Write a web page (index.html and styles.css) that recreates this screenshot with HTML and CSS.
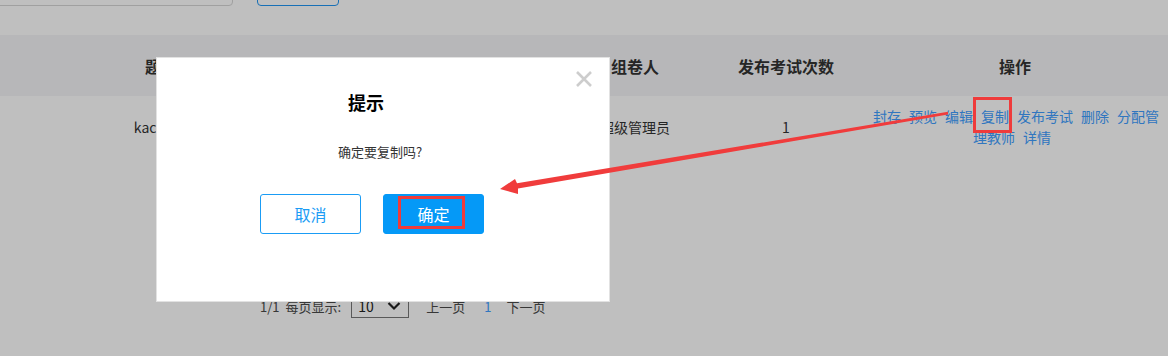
FILE: index.html
```html
<!DOCTYPE html>
<html lang="zh-CN">
<head>
    <meta charset="utf-8"/>
    <title>试卷管理</title>
    <link rel="stylesheet" href="styles.css">
</head>
<body>
    <div class="page">
        <div class="toolbar">
            <input class="search-input" type="text">
            <button class="search-btn" type="button"></button>
        </div>

        <div class="table">
            <div class="thead">
                <div class="cell">题库名称</div>
                <div class="cell">题目数量</div>
                <div class="cell">组卷人</div>
                <div class="cell">发布考试次数</div>
                <div class="cell">操作</div>
            </div>
            <div class="tbody">
                <div class="row">
                    <div class="cell">kac测试题库1</div>
                    <div class="cell">20</div>
                    <div class="cell">超级管理员</div>
                    <div class="cell">1</div>
                    <div class="cell actions"><a>封存</a><a>预览</a><a>编辑</a><a>复制</a><a>发布考试</a><a>删除</a><a>分配管理教师</a><a>详情</a></div>
                </div>
            </div>
        </div>

        <div class="pager">
            <span>1/1</span>
            <span class="pager-label">每页显示:</span>
            <div class="page-size">
                <span>10</span>
                <svg class="chevron" width="14" height="10" viewBox="0 0 14 10"><polyline points="1.5,2 7,7.5 12.5,2" fill="none" stroke="#222" stroke-width="2.2"/></svg>
            </div>
            <span class="pager-prev">上一页</span>
            <span class="pager-num">1</span>
            <span class="pager-next">下一页</span>
        </div>
    </div>

    <!-- confirm dialog -->
    <div class="mask"></div>
    <div class="dialog" role="dialog" aria-labelledby="dialog-title">
        <svg class="dialog-close" width="18" height="18" viewBox="0 0 18 18"><path d="M2 2 L16 16 M16 2 L2 16" stroke="#cdcdcd" stroke-width="2.6"/></svg>
        <h2 id="dialog-title" class="dialog-title">提示</h2>
        <p class="dialog-text">确定要复制吗?</p>
        <div class="dialog-buttons">
            <button class="btn btn-cancel" type="button">取消</button>
            <button class="btn btn-ok" type="button">确定</button>
        </div>
    </div>

    <!-- screenshot annotations -->
    <svg class="marks" width="1168" height="356" viewBox="0 0 1168 356">
        <rect x="974.5" y="98.5" width="36" height="33" fill="none" stroke="#ef3b3b" stroke-width="3"/>
        <rect x="399.5" y="197.5" width="64" height="30" fill="none" stroke="#ef3b3b" stroke-width="3"/>
        <polygon points="500,189 515,179 517,183.3 948,111.8 948,114.4 518,188.6 518,194" fill="#f03c3c"/>
    </svg>
</body>
</html>
```

FILE: styles.css
```css
* {
    box-sizing: border-box;
}

body {
    margin: 0;
    font-family: "Noto Sans CJK SC", "Noto Sans", sans-serif;
    color: #333;
    background: #fff;
    overflow: hidden;
}

.page {
    width: 1168px;
    height: 356px;
}

/* search bar, mostly scrolled out of view */
.toolbar {
    height: 35px;
    display: flex;
    gap: 24px;
}
.search-input {
    margin: -26px 0 0 -10px;
    width: 243px;
    height: 32px;
    border: 1px solid #d6d6d6;
    border-radius: 4px;
}
.search-btn {
    margin-top: -26px;
    width: 82px;
    height: 32px;
    border: 1px solid #2196f3;
    border-radius: 4px;
    background: #fff;
}

/* table */
.thead,
.row {
    display: grid;
    grid-template-columns: 354px 206px 150px 152px 306px;
    align-items: center;
    text-align: center;
}
.thead {
    height: 61px;
    background: #f5f5f7;
    font-size: 16px;
    font-weight: bold;
}
.tbody {
    height: 176px;
}
.row {
    height: 62px;
    font-size: 14px;
}
.actions {
    padding: 0 3px 0 1px;
    line-height: 21px;
}
.actions a {
    margin: 0 4px;
    color: #409eff;
    cursor: pointer;
}

/* pagination */
.pager {
    height: 68px;
    padding-left: 260px;
    display: flex;
    align-items: center;
    font-size: 13px;
    color: #4a4a4a;
}
.pager-label {
    margin-left: 6px;
}
.page-size {
    margin-left: 10px;
    width: 58px;
    height: 24px;
    border: 1px solid #777;
    display: flex;
    align-items: center;
    justify-content: space-between;
    padding: 0 7px 0 6px;
    font-size: 14px;
    color: #222;
}
.pager-prev {
    margin-left: 17px;
}
.pager-num {
    margin-left: 19px;
    color: #409eff;
}
.pager-next {
    margin-left: 15px;
}

/* dialog */
.mask {
    position: fixed;
    top: 0;
    right: 0;
    bottom: 0;
    left: 0;
    background: rgba(0, 0, 0, 0.25);
}
.dialog {
    position: fixed;
    top: 57px;
    left: 156px;
    width: 454px;
    height: 245px;
    background: #fff;
    border: 1px solid #e2e2e2;
    display: flex;
    flex-direction: column;
    align-items: center;
}
.dialog-close {
    position: absolute;
    top: 12px;
    right: 16px;
}
.dialog-title {
    margin: 32px 34px 0 0;
    font-size: 18px;
    line-height: 24px;
    color: #000;
}
.dialog-text {
    margin: 28px 6px 0 0;
    font-size: 13px;
    line-height: 20px;
    color: #333;
}
.dialog-buttons {
    margin: 32px 22px 0 0;
    display: flex;
    gap: 22px;
}
.btn {
    width: 101px;
    height: 40px;
    border-radius: 3px;
    font-family: inherit;
    font-size: 16px;
}
.btn-cancel {
    border: 1px solid #1a9cf5;
    background: #fff;
    color: #1a9cf5;
}
.btn-ok {
    border: 1px solid #0599f7;
    background: #0599f7;
    color: #fff;
}

/* red annotation marks drawn over the page */
.marks {
    position: fixed;
    top: 0;
    left: 0;
    pointer-events: none;
}
```
